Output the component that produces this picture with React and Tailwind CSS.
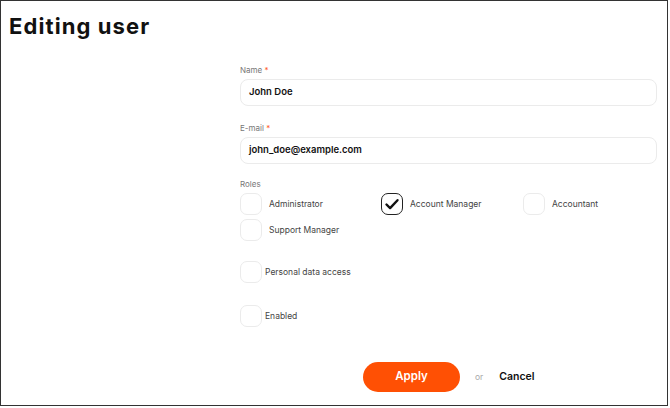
const roles = [
  { label: 'Administrator', checked: false },
  { label: 'Account Manager', checked: true },
  { label: 'Accountant', checked: false },
  { label: 'Support Manager', checked: false },
];

const Box = ({ checked }) => (
  <span
    className={`flex h-[22px] w-[22px] shrink-0 items-center justify-center rounded-[7px] ${
      checked ? 'border-[1.5px] border-[#222]' : 'border border-[#ebebeb]'
    }`}
  >
    {checked && (
      <svg width="16" height="16" viewBox="0 0 16 16" fill="none">
        <path d="M2.5 8.5l3.6 3.6L13.5 4.2" stroke="#111" strokeWidth="2.4" strokeLinecap="round" strokeLinejoin="round" />
      </svg>
    )}
  </span>
);

const Field = ({ label, value }) => (
  <div>
    <p className="text-[8px] leading-[10px] text-[#777]">
      {label} <span className="text-[#ff5a1f]">*</span>
    </p>
    <div className="mt-[4px] flex h-[27px] items-center rounded-[8px] border border-[#ebebeb] px-[8px] text-[9.5px] font-semibold text-[#111]">
      {value}
    </div>
  </div>
);

export default function App() {
  return (
    <div
      className="h-[406px] w-[668px] border border-[#333] bg-white"
      style={{ fontFamily: 'Inter, "Open Sans", sans-serif' }}
    >
      <h1 className="ml-[8px] mt-[10px] text-[22px] font-bold leading-[30px] tracking-[1.1px] text-[#111]">Editing user</h1>

      <div className="ml-[239px] mr-[10px] mt-[24px]">
        <Field label="Name" value="John Doe" />
        <div className="mt-[17px]">
          <Field label="E-mail" value="john_doe@example.com" />
        </div>

        <p className="mt-[15px] text-[8px] leading-[10px] text-[#777]">Roles</p>
        <div className="mt-[4px] grid grid-cols-[141px_142px_1fr] gap-y-[4px]">
          {roles.map((r) => (
            <label key={r.label} className="flex items-center gap-[7px] text-[8.5px] text-[#444]">
              <Box checked={r.checked} />
              {r.label}
            </label>
          ))}
        </div>

        <label className="mt-[20px] flex items-center gap-[3px] text-[8.5px] text-[#444]">
          <Box />
          Personal data access
        </label>
        <label className="mt-[22px] flex items-center gap-[3px] text-[8.5px] text-[#444]">
          <Box />
          Enabled
        </label>

        <div className="ml-[123px] mt-[35px] flex items-center">
          <button
            type="button"
            className="h-[30px] w-[97px] rounded-full bg-[#ff5004] text-[11.5px] font-semibold text-white"
          >
            Apply
          </button>
          <span className="ml-[15px] text-[8.5px] text-[#aaa]">or</span>
          <button type="button" className="ml-[16px] text-[10.5px] font-semibold text-[#111]">
            Cancel
          </button>
        </div>
      </div>
    </div>
  );
}
